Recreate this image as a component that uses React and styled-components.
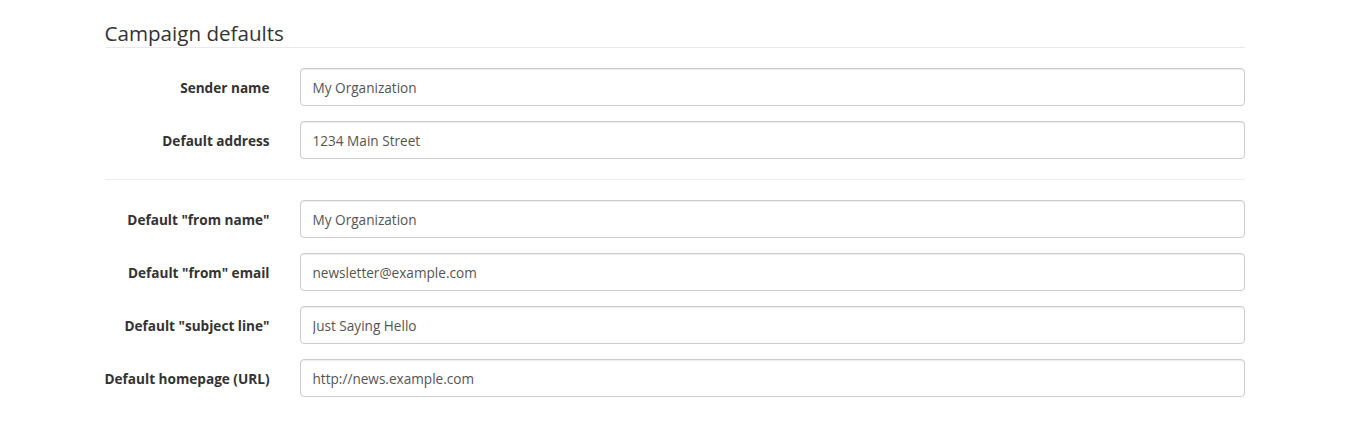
import React from 'react'
import styled, { createGlobalStyle } from 'styled-components'

const Global = createGlobalStyle`
  body {
    margin: 0;
    background: #fff;
    font-family: "Open Sans", "Noto Sans", sans-serif;
    color: #333;
  }
`
const Container = styled.div`
  width: 1140px;
  margin: 0 auto;
  padding: 17px 0 0;
`
const Legend = styled.h2`
  font-size: 20.6px;
  font-weight: 400;
  line-height: 30px;
  margin: 0 0 20px;
  padding-top: 1px;
  height: 29px;
  color: #333;
  border-bottom: 1px solid #e9e9e9;
`
const Group = styled.div`
  display: grid;
  grid-template-columns: 165px 1fr;
  column-gap: 30px;
  align-items: center;
  margin-bottom: 15px;
`
const Label = styled.label`
  text-align: right;
  font-size: 13.6px;
  font-weight: 700;
  color: #333;
`
const Input = styled.input`
  box-sizing: border-box;
  height: 38px;
  width: 100%;
  padding: 0 12px;
  font-family: inherit;
  font-size: 13.6px;
  color: #555;
  background: #fff;
  border: 1px solid #ccc;
  border-radius: 4px;
  box-shadow: inset 0 1px 1px rgba(0, 0, 0, 0.075);
  outline: none;
`
const Divider = styled.hr`
  border: 0;
  border-top: 1px solid #eee;
  margin: 20px 0 20px;
`

const Field = ({ label, value }) => (
  <Group>
    <Label>{label}</Label>
    <Input defaultValue={value} />
  </Group>
)

const App = () => (
  <>
    <Global />
    <Container>
      <Legend>Campaign defaults</Legend>
      <Field label="Sender name" value="My Organization" />
      <Field label="Default address" value="1234 Main Street" />
      <Divider />
      <Field label='Default "from name"' value="My Organization" />
      <Field label='Default "from" email' value="newsletter@example.com" />
      <Field label='Default "subject line"' value="Just Saying Hello" />
      <Field label="Default homepage (URL)" value="http://news.example.com" />
    </Container>
  </>
)

export default App
